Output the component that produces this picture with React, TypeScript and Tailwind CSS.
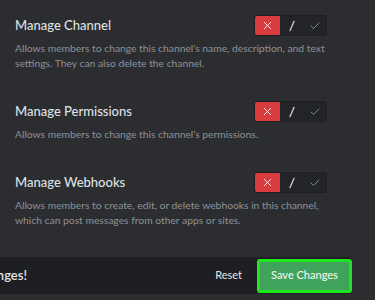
import { X, Check } from "lucide-react";

type Permission = {
  title: string;
  description: string;
};

const permissions: Permission[] = [
  {
    title: "Manage Channel",
    description:
      "Allows members to change this channel’s name, description, and text settings. They can also delete the channel.",
  },
  {
    title: "Manage Permissions",
    description: "Allows members to change this channel’s permissions.",
  },
  {
    title: "Manage Webhooks",
    description:
      "Allows members to create, edit, or delete webhooks in this channel, which can post messages from other apps or sites.",
  },
];

function PermissionToggle() {
  return (
    <div className="flex h-[21px] w-[73px] shrink-0 overflow-hidden rounded-[3px] border border-[#1e1f22] bg-[#232428]">
      <div className="flex w-[25px] items-center justify-center bg-[#d83c3e]">
        <X className="h-[13px] w-[13px] text-white" strokeWidth={1.6} />
      </div>
      <div className="flex w-[23px] items-center justify-center">
        <svg width="8" height="12" viewBox="0 0 8 12" className="text-[#c4c6ca]">
          <path d="M6 1.5 2 10.5" stroke="currentColor" strokeWidth="1.4" strokeLinecap="round" />
        </svg>
      </div>
      <div className="flex flex-1 items-center justify-center">
        <Check className="h-[12px] w-[12px] text-[#8fa597]" strokeWidth={1.6} />
      </div>
    </div>
  );
}

export default function App() {
  return (
    <div
      className="h-[300px] w-[375px] overflow-hidden bg-[#2b2d31]"
      style={{ fontFamily: 'Lato, "Noto Sans", sans-serif' }}
    >
      <div className="flex flex-col gap-[30px] pl-[15px] pr-[48px] pt-[15px]">
        {permissions.map((p) => (
          <section key={p.title}>
            <div className="flex h-[21px] items-center justify-between">
              <h3 className="text-[13px] font-medium text-[#dfe0e3]">{p.title}</h3>
              <PermissionToggle />
            </div>
            <p className="mr-[-10px] mt-[5px] text-[10.3px] leading-[15px] text-[#8e9198]">
              {p.description}
            </p>
          </section>
        ))}
      </div>

      <div className="mt-[29px] flex h-[37px] w-[352px] items-center rounded-r-[4px] bg-[#1e1f22]">
        <div className="flex w-[27px] justify-end overflow-hidden whitespace-nowrap">
          <span className="text-[13px] font-semibold text-[#e3e4e6]">
            Careful — you have unsaved changes!
          </span>
        </div>
        <div className="ml-auto flex items-center gap-[15px]">
          <span className="text-[11px] text-[#e6e7e9]">Reset</span>
          <button className="flex h-[34px] w-[95px] items-center justify-center rounded-[3px] border-[3px] border-[#1ee51e] bg-[#3fa35b] text-[11px] font-medium text-[#f2f7f3]">
            Save Changes
          </button>
        </div>
      </div>
    </div>
  );
}
